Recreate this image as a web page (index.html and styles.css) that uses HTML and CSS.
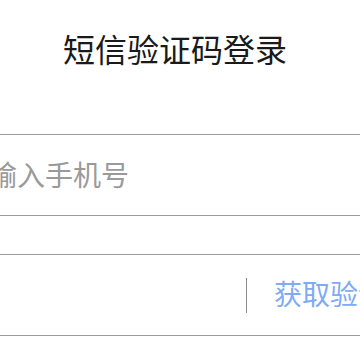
FILE: index.html
```html
<!DOCTYPE html>
<html lang="zh-CN">
<head>
<meta charset="utf-8">
<link rel="stylesheet" href="styles.css">
</head>
<body>
<div class="page">
  <header class="head">
    <h1 class="title">短信验证码登录</h1>
  </header>
  <div class="row">
    <span class="placeholder">请输入手机号</span>
  </div>
  <div class="row code-row">
    <div class="code-input"></div>
    <span class="divider"></span>
    <span class="get-code">获取验证码</span>
  </div>
</div>
</body>
</html>
```
FILE: styles.css
```css
html, body {
  margin: 0;
  padding: 0;
  background: #fff;
  overflow: hidden;
}
.page {
  width: 360px;
  height: 360px;
  overflow: hidden;
  font-family: "Noto Sans CJK SC", "Noto Sans", sans-serif;
}
.head {
  height: 134px;
  display: flex;
  justify-content: center;
  padding-right: 10px;
  box-sizing: border-box;
}
.title {
  margin: 26px 0 0;
  font-size: 32px;
  font-weight: 400;
  line-height: 44px;
  color: #1a1a1a;
}
.row {
  height: 80px;
  border-top: 1px solid #9c9c9c;
  border-bottom: 1px solid #9c9c9c;
  display: flex;
  align-items: center;
  white-space: nowrap;
}
.code-row {
  margin-top: 38px;
}
.placeholder {
  margin-left: -39px;
  font-size: 28px;
  color: #9a9a9a;
  line-height: 1;
  padding-bottom: 2px;
}
.code-input {
  flex: 0 0 246px;
}
.divider {
  flex: 0 0 1px;
  height: 35px;
  background: #8a8a8a;
}
.get-code {
  margin-left: 27px;
  font-size: 28px;
  color: #80aaf4;
  line-height: 1;
  padding-bottom: 4px;
}
```
